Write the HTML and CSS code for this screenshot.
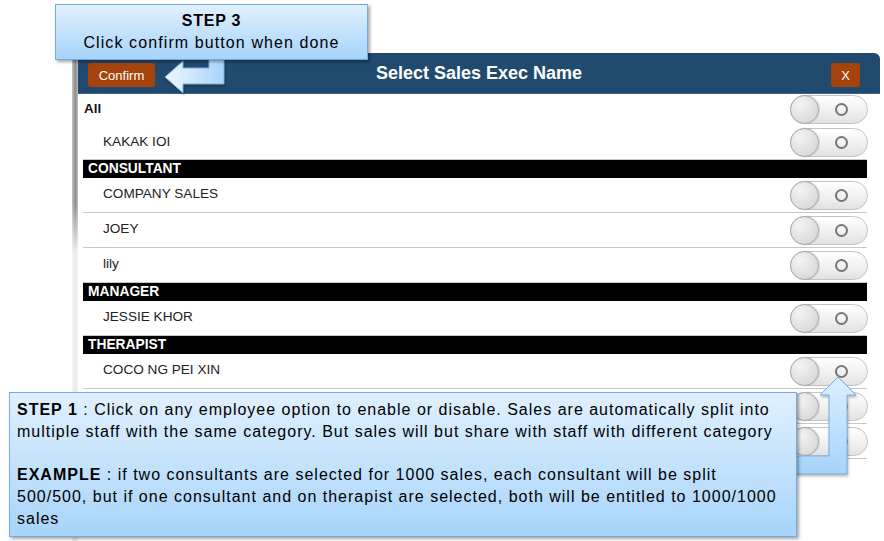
FILE: index.html
```html
<!DOCTYPE html>
<html lang="en">
<head>
<meta charset="utf-8">
<title>Select Sales Exec Name</title>
<link rel="stylesheet" href="styles.css">
</head>
<body>
<div class="page">
  <div class="shade"></div>
  <div class="modal">
    <div class="modal-head">
      <button class="btn btn-confirm">Confirm</button>
      <h1 class="title">Select Sales Exec Name</h1>
      <button class="btn btn-x">X</button>
    </div>
    <ul class="list">
      <li class="row row-all"><span class="name name-all">All</span><span class="toggle"><span class="knob"></span><span class="ring"></span></span></li>
      <li class="row row-first"><span class="name">KAKAK IOI</span><span class="toggle"><span class="knob"></span><span class="ring"></span></span></li>
      <li class="cat">CONSULTANT</li>
      <li class="row"><span class="name">COMPANY SALES</span><span class="toggle"><span class="knob"></span><span class="ring"></span></span></li>
      <li class="row"><span class="name">JOEY</span><span class="toggle"><span class="knob"></span><span class="ring"></span></span></li>
      <li class="row"><span class="name">lily</span><span class="toggle"><span class="knob"></span><span class="ring"></span></span></li>
      <li class="cat">MANAGER</li>
      <li class="row"><span class="name">JESSIE KHOR</span><span class="toggle"><span class="knob"></span><span class="ring"></span></span></li>
      <li class="cat">THERAPIST</li>
      <li class="row"><span class="name">COCO NG PEI XIN</span><span class="toggle"><span class="knob"></span><span class="ring"></span></span></li>
      <li class="row"><span class="name"></span><span class="toggle"><span class="knob"></span><span class="ring"></span></span></li>
      <li class="row"><span class="name"></span><span class="toggle"><span class="knob"></span><span class="ring"></span></span></li>
    </ul>
  </div>

  <svg class="arrow arrow-left" width="884" height="541" viewBox="0 0 884 541">
    <defs>
      <linearGradient id="ga" x1="0" y1="0" x2="1" y2="0">
        <stop offset="0" stop-color="#eef7ff"/>
        <stop offset="1" stop-color="#a8d4fa"/>
      </linearGradient>
      <linearGradient id="gb" x1="0" y1="0" x2="0" y2="1">
        <stop offset="0" stop-color="#dcefff"/>
        <stop offset="1" stop-color="#a6d3fa"/>
      </linearGradient>
    </defs>
    <polygon points="209,52 224,52 224,84 183,84 183,93 165,77 183,61 183,68 209,68" fill="url(#ga)" stroke="#7aaee2" stroke-width="1"/>
    <polygon points="838,377 856,395 847,395 847,474 780,474 780,456 829,456 829,395 820,395" fill="url(#gb)" stroke="#7aaee2" stroke-width="1"/>
  </svg>

  <div class="callout callout-step3">
    <div class="step3-title">STEP 3</div>
    <div class="step3-text">Click confirm button when done</div>
  </div>

  <div class="callout callout-step1">
    <p class="para"><b>STEP 1</b> : Click on any employee option to enable or disable. Sales are automatically split into<br>multiple staff with the same category. But sales will but share with staff with different category</p>
    <p class="para"><b>EXAMPLE</b> : if two consultants are selected for 1000 sales, each consultant will be split<br>500/500, but if one consultant and on therapist are selected, both will be entitled to 1000/1000<br>sales</p>
  </div>
</div>
</body>
</html>
```

FILE: styles.css
```css
* { box-sizing: border-box; }
html, body {
  margin: 0;
  padding: 0;
  background: #ffffff;
  font-family: "Liberation Sans", Arial, sans-serif;
}
.page {
  position: relative;
  width: 884px;
  height: 541px;
  overflow: hidden;
  display: flex;
  padding: 53px 0 0 72px;
}
.shade {
  width: 6px;
  flex: none;
  background:
    linear-gradient(to bottom, rgba(255,255,255,0) 0, rgba(255,255,255,0) 150px, rgba(255,255,255,0.82) 200px, rgba(255,255,255,0.82) 100%),
    linear-gradient(to right, #c4c4c4, #8c8c8c 55%, #bdbdbd);
}
.modal {
  width: 802px;
  flex: none;
  background: #ffffff;
}
.modal-head {
  height: 41px;
  background: #214b6e;
  border-top-right-radius: 6px;
  display: grid;
  grid-template-columns: 1fr auto 1fr;
  align-items: center;
  padding: 0;
  border-bottom: 1px solid #3d6487;
}
.title {
  margin: 0;
  color: #ffffff;
  font-size: 18px;
  font-weight: bold;
  text-align: center;
}
.btn {
  height: 24px;
  border: 0;
  border-radius: 3px;
  background: #a4440c;
  color: #ffffff;
  font-family: "Liberation Sans", Arial, sans-serif;
  font-size: 13px;
  padding: 0 10px;
  margin-top: 4px;
}
.btn-confirm {
  justify-self: start;
  margin-left: 10px;
  width: 67px;
}
.btn-x {
  width: 29px;
  padding: 0;
  justify-self: end;
  margin-right: 20px;
}
.list {
  list-style: none;
  margin: 0 13px 0 5px;
  padding: 0;
}
.row {
  height: 35px;
  border-bottom: 1px solid #c6c6c6;
  display: flex;
  align-items: center;
  justify-content: space-between;
  padding-left: 20px;
  color: #222222;
  font-size: 13.6px;
}
.row .name { margin-bottom: 3px; }
.row-all {
  height: 32px;
  border-bottom: 0;
  padding-left: 1px;
  align-items: flex-start;
  padding-top: 1px;
}
.row-all .name { padding-top: 6px; margin-bottom: 0; }
.row-first { height: 34px; }
.name-all {
  font-weight: bold;
  color: #111111;
  font-size: 13.4px;
}
.cat {
  height: 18px;
  background: #000000;
  color: #ffffff;
  font-weight: bold;
  font-size: 13.8px;
  line-height: 18px;
  padding-left: 5px;
}
.toggle {
  width: 78px;
  height: 29px;
  border: 1px solid #c2c2c2;
  border-radius: 15px;
  background: linear-gradient(to bottom, #ffffff, #efefef 60%, #e2e2e2);
  display: flex;
  align-items: center;
  margin-right: -1px;
}
.knob {
  width: 29px;
  height: 29px;
  margin: -1px 0 -1px -1px;
  border-radius: 50%;
  border: 1px solid #a8a8a8;
  background: radial-gradient(circle at 35% 30%, #f4f4f4, #dcdcdc 70%, #cfcfcf);
  box-shadow: 1px 0 1px rgba(0,0,0,0.12);
  flex: none;
}
.ring {
  width: 13px;
  height: 13px;
  border: 2px solid #767676;
  border-radius: 50%;
  margin-left: 16px;
  flex: none;
}
.arrow {
  position: absolute;
  left: 0;
  top: 0;
  filter: drop-shadow(1px 2px 1px rgba(0,0,0,0.25));
}
.callout {
  position: absolute;
  border: 1px solid #74aade;
  background: linear-gradient(to bottom, #e0f0fe, #a7d4fa);
  box-shadow: 2px 2px 3px rgba(0,0,0,0.35);
  color: #000000;
}
.callout-step3 {
  left: 55px;
  top: 4px;
  width: 313px;
  height: 56px;
  text-align: center;
  font-size: 16px;
  line-height: 22px;
  padding-top: 5px;
  letter-spacing: 1.1px;
}
.step3-title { font-weight: bold; letter-spacing: 0.8px; }
.callout-step1 {
  left: 9px;
  top: 392px;
  width: 788px;
  height: 145px;
  padding: 6px 0 0 7px;
  font-size: 16px;
  line-height: 21.8px;
  letter-spacing: 1px;
  white-space: nowrap;
}
.para {
  margin: 0 0 21.8px 0;
}
```
